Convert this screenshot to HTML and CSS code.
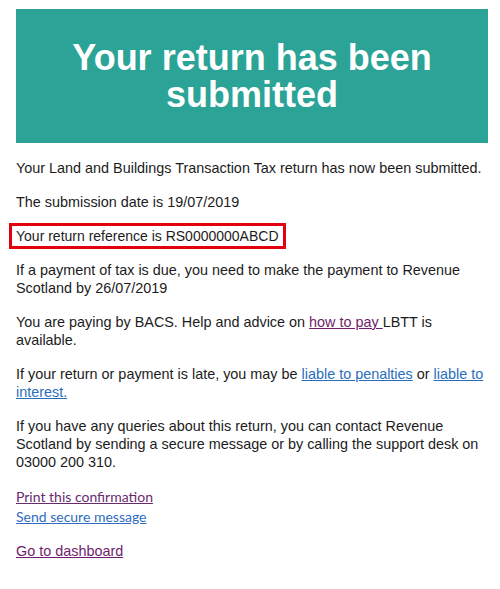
FILE: index.html
```html
<!DOCTYPE html>
<html lang="en">
<head>
    <meta charset="UTF-8">
    <meta name="viewport" content="width=device-width, initial-scale=1.0">
    <title>Return submitted</title>
    <link rel="stylesheet" href="styles.css">
</head>
<body>
    <main class="page">
        <div class="banner">
            <h1>Your return has been submitted</h1>
        </div>

        <p>Your Land and Buildings Transaction Tax return has now been submitted.</p>
        <p>The submission date is 19/07/2019</p>
        <p><span class="reference">Your return reference is RS0000000ABCD</span></p>
        <p>If a payment of tax is due, you need to make the payment to Revenue Scotland by 26/07/2019</p>
        <p>You are paying by BACS. Help and advice on <a class="visited" href="#">how to pay </a>LBTT is available.</p>
        <p>If your return or payment is late, you may be <a href="#">liable to penalties</a> or <a href="#">liable to interest.</a></p>
        <p>If you have any queries about this return, you can contact Revenue Scotland by sending a secure message or by calling the support desk on 03000 200 310.</p>

        <div class="actions">
            <a class="thin visited" href="#">Print this confirmation</a>
            <a class="thin" href="#">Send secure message</a>
        </div>

        <p><a class="visited" href="#">Go to dashboard</a></p>
    </main>
</body>
</html>
```

FILE: styles.css
```css
body { margin: 0; font-family: "Liberation Sans", Arial, sans-serif; font-size: 14.4px; line-height: 18px; color: #1c1c1c; background: #fff; }
.page { padding: 9px 12px 20px 16px; }
.banner { background-color: #2ba396; padding: 30px 20px; margin-bottom: 16px; }
.banner h1 { margin: 0; color: #fff; text-align: center; font-size: 36px; line-height: 37px; font-weight: bold; }
p { margin: 0 0 16px; }
a { color: #2a6ebb; text-decoration: underline; }
a.visited { color: #6f1d6d; }
.reference { margin-left: -7px; padding: 2px 4px; border: 3px solid #e2000f; font-size: 14px; }
.actions { display: flex; flex-direction: column; align-items: flex-start; margin: 4px 0 15px; }
.actions .thin { font-family: Lato, "Open Sans", sans-serif; font-weight: 400; font-size: 14px; line-height: 20px; }
.actions .thin.visited { color: #6a2a70; }
.actions .thin:not(.visited) { color: #2f6cc0; }
```
